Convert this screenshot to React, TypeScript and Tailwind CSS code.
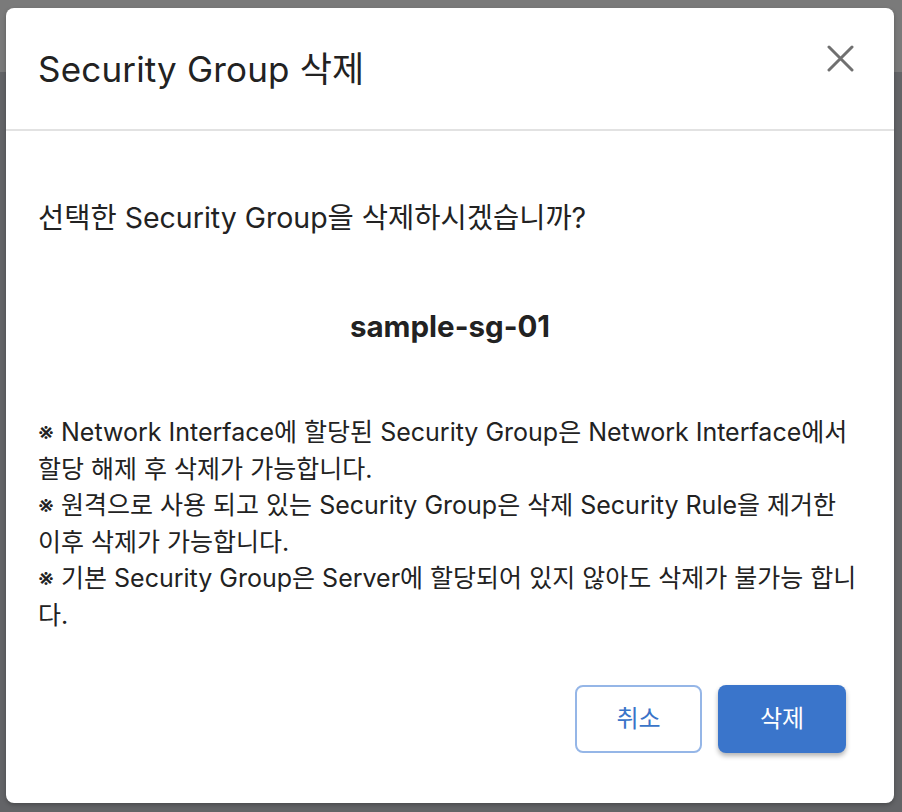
const notes = [
  "※ Network Interface에 할당된 Security Group은 Network Interface에서",
  "할당 해제 후 삭제가 가능합니다.",
  "※ 원격으로 사용 되고 있는 Security Group은 삭제 Security Rule을 제거한",
  "이후 삭제가 가능합니다.",
  "※ 기본 Security Group은 Server에 할당되어 있지 않아도 삭제가 불가능 합니",
  "다.",
];

const CloseIcon = () => (
  <svg width="27" height="27" viewBox="0 0 27 27" fill="none" stroke="#707070" strokeWidth="3" strokeLinecap="round">
    <path d="M2 2 25 25M25 2 2 25" />
  </svg>
);

const App = () => {
  return (
    <div
      className="relative h-[812px] w-[902px] overflow-hidden"
      style={{ fontFamily: 'Inter, "Noto Sans CJK KR", sans-serif' }}
    >
      <div className="h-[72px] bg-[#7a7a7a]" />
      <div className="h-[740px] bg-[#636467]" />

      <div className="absolute left-[6px] top-[8px] flex h-[795px] w-[888px] flex-col rounded-[8px] bg-white shadow-[0_2px_4px_rgba(0,0,0,0.25)]">
        <div className="flex h-[123px] items-center justify-between border-b-2 border-[#e2e2e2] pl-[32px] pr-[40px]">
          <h2 className="pt-[2px] text-[35px] font-normal tracking-[0.005em] text-[#222]">Security Group 삭제</h2>
          <button className="mb-[20px]">
            <CloseIcon />
          </button>
        </div>

        <div className="flex flex-1 flex-col px-[32px] pt-[69px]">
          <p className="text-[28.5px] leading-[36px] text-[#222]">선택한 Security Group을 삭제하시겠습니까?</p>
          <p className="mt-[72px] text-center text-[29.5px] font-bold leading-[36px] text-[#222]">sample-sg-01</p>
          <div className="mt-[70px] text-[25px] leading-[36.5px] text-[#222]">
            {notes.map((line) => (
              <div key={line} className="whitespace-nowrap">
                {line}
              </div>
            ))}
          </div>
        </div>

        <div className="flex justify-end gap-[16px] pb-[50px] pr-[48px]">
          <button className="h-[68px] w-[127px] rounded-[8px] border-2 border-[#95b6e7] bg-white text-[24px] text-[#3a74c8]">
            취소
          </button>
          <button className="h-[68px] w-[128px] rounded-[8px] bg-[#3a75cb] text-[24px] text-white shadow-[0_3px_5px_rgba(0,0,0,0.3)]">
            삭제
          </button>
        </div>
      </div>
    </div>
  );
};

export default App;
